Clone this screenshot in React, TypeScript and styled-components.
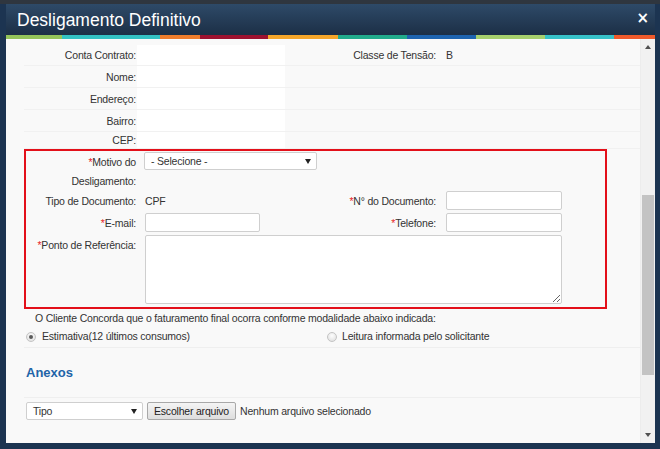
import React from 'react';
import styled, { createGlobalStyle } from 'styled-components';

const Global = createGlobalStyle`
  html, body { margin: 0; padding: 0; }
  body {
    width: 660px; height: 449px; overflow: hidden;
    background: #1c3451;
    font-family: "Liberation Sans", Arial, sans-serif;
  }
`;

const Frame = styled.div`
  width: 660px; height: 449px; box-sizing: border-box;
  padding: 4px 5px 6px 6px;
  background: linear-gradient(#2f363f 0 4px, #1c3451 4px);
  display: flex;
`;

const Dialog = styled.div`
  flex: 1;
  display: flex; flex-direction: column;
  background: #f9f9f9;
  overflow: hidden;
`;

const Header = styled.div`
  height: 31px;
  display: flex; align-items: center; justify-content: space-between;
  padding: 0 6px 0 11px;
  background: linear-gradient(#2e4a68, #1c2f46);
`;

const Title = styled.h1`
  margin: 1px 0 0 0;
  color: #fff;
  font: 400 17.5px "Liberation Sans", Arial, sans-serif;
`;

const Close = styled.span`
  color: #fff;
  font: 700 15px "DejaVu Sans", sans-serif;
  line-height: 1;
  margin-top: -2px;
`;

const Stripe = styled.div`
  height: 4px;
  display: flex;
`;

const Seg = styled.div<{ $w: number; $c: string }>`
  width: ${p => p.$w}px;
  flex: none;
  background: ${p => p.$c};
`;

const Body = styled.div`
  flex: 1;
  display: flex;
  min-height: 0;
`;

const Content = styled.div`
  flex: 1;
  padding: 6px 0 0 18px;
  color: #333;
  font-size: 10.5px;
  letter-spacing: -0.2px;
`;

const Scroll = styled.div`
  width: 15px;
  flex: none;
  display: flex; flex-direction: column; align-items: center;
  background: #f1f1f1;
  border-left: 1px solid #ececec;
  box-sizing: border-box;
`;

const Arrow = styled.div<{ $down?: boolean }>`
  height: 16px; width: 100%;
  display: flex; align-items: center; justify-content: center;
  &::after {
    content: "";
    border-left: 3.5px solid transparent;
    border-right: 3.5px solid transparent;
    ${p => (p.$down ? 'border-top: 4px solid #505050;' : 'border-bottom: 4px solid #505050;')}
  }
`;

const TrackSpace = styled.div<{ $h: number }>`
  height: ${p => p.$h}px; flex: none;
`;

const Thumb = styled.div`
  width: 12px; height: 180px;
  background: #c3c3c3;
  flex: none;
`;

const Grid = styled.div<{ $first: number; $h?: number; $align?: string }>`
  display: grid;
  grid-template-columns: ${p => p.$first}px 190px 119px 116px 1fr;
  align-items: ${p => p.$align || 'center'};
  ${p => (p.$h ? `height: ${p.$h}px;` : '')}
`;

const InfoRow = styled(Grid)`
  border-bottom: 1px solid #f1f1f1;
  box-sizing: border-box;
`;

const Label = styled.div<{ $lh?: number }>`
  text-align: right;
  padding-right: 1px;
  line-height: ${p => p.$lh || 14}px;
`;

const Label2 = styled.div`
  text-align: right;
  padding-right: 10px;
`;

const Value = styled.div<{ $white?: boolean }>`
  align-self: stretch;
  display: flex; align-items: center;
  padding-left: 8px;
  ${p => (p.$white ? 'background: linear-gradient(90deg, #fff 148px, transparent 148px);' : '')}
`;

const Value2 = styled.div`
  padding-left: 0;
`;

const Req = styled.span`
  color: #e8262b;
`;

const RedBox = styled.div`
  width: 583px;
  box-sizing: border-box;
  border: 2px solid #e3101a;
  padding: 1px 0 3px 0;
  display: flex; flex-direction: column; gap: 1px;
`;

const SelectBox = styled.div<{ $w: number }>`
  width: ${p => p.$w}px; height: 18px; box-sizing: border-box;
  border: 1px solid #cfcfcf;
  border-radius: 2px;
  background: #fff;
  display: flex; align-items: center; justify-content: space-between;
  padding: 0 5px 0 6px;
  color: #333;
  font-size: 10.5px;
  letter-spacing: -0.2px;
`;

const Caret = styled.span`
  width: 0; height: 0;
  border-left: 3px solid transparent;
  border-right: 3px solid transparent;
  border-top: 5px solid #222;
`;

const Input = styled.input<{ $w: number }>`
  width: ${p => p.$w}px; height: 19px; box-sizing: border-box;
  border: 1px solid #cfcfcf;
  border-radius: 2px;
  background: #fff;
  margin: 0;
  padding: 0 4px;
  outline: none;
`;

const TextArea = styled.textarea`
  grid-column: 2 / 5;
  width: 417px; height: 69px; box-sizing: border-box;
  margin: 0 0 0 8px;
  border: 1px solid #cfcfcf;
  border-radius: 2px;
  background: #fff;
  outline: none;
  display: block;
`;

const Sentence = styled.div`
  margin-top: 2px;
  padding-left: 11px;
  line-height: 14px;
`;

const RadioRow = styled.div`
  margin-top: 2px;
  height: 21px;
  display: grid;
  grid-template-columns: 303px 1fr;
  align-items: center;
  border-bottom: 1px solid #efefef;
  box-sizing: border-box;
  padding-bottom: 3px;
`;

const RadioOpt = styled.label<{ $gap: number; $pad: number }>`
  display: flex; align-items: center;
  gap: ${p => p.$gap}px;
  padding-left: ${p => p.$pad}px;
`;

const Radio = styled.span<{ $on?: boolean }>`
  width: 10px; height: 10px; box-sizing: border-box;
  border-radius: 50%;
  border: 1px solid #c4c4c4;
  background: radial-gradient(circle at 50% 35%, #fdfdfd, #dcdcdc);
  display: flex; align-items: center; justify-content: center;
  margin-top: 3px;
  &::after {
    content: "";
    width: 4px; height: 4px; border-radius: 50%;
    background: ${p => (p.$on ? '#5a5a5a' : 'transparent')};
  }
`;

const AnexosRow = styled.div`
  height: 50px;
  display: flex; align-items: center;
  padding-left: 2px;
  border-bottom: 1px solid #efefef;
  box-sizing: border-box;
`;

const Anexos = styled.h2`
  margin: 0;
  color: #1f64a8;
  font: 700 13px "Liberation Sans", Arial, sans-serif;
  letter-spacing: 0;
`;

const FileRow = styled.div`
  padding: 4px 0 0 2px;
  display: flex; align-items: center; gap: 4px;
`;

const FileButton = styled.button`
  height: 18px;
  padding: 0 6px;
  border: 1px solid #a8a8a8;
  border-radius: 2px;
  background: linear-gradient(#f4f4f4, #dedede);
  color: #222;
  font: 10.5px "Liberation Sans", Arial, sans-serif;
  letter-spacing: -0.2px;
`;

const stripe: [number, string][] = [
  [56, '#94c35a'],
  [98, '#33c1c3'],
  [40, '#ef7d2c'],
  [68, '#9e1230'],
  [70, '#f5a62a'],
  [69, '#21ab8b'],
  [69, '#1e64b0'],
  [69, '#a6cf6d'],
  [69, '#36c1c8'],
  [41, '#f05a2b'],
];

export default function App() {
  return (
    <>
      <Global />
      <Frame>
        <Dialog>
          <Header>
            <Title>Desligamento Definitivo</Title>
            <Close>×</Close>
          </Header>
          <Stripe>
            {stripe.map(([w, c], i) => (
              <Seg key={i} $w={w} $c={c} />
            ))}
          </Stripe>
          <Body>
            <Content>
              <InfoRow $first={113} $h={21}>
                <Label>Conta Contrato:</Label>
                <Value $white />
                <Label2>Classe de Tensão:</Label2>
                <Value2>B</Value2>
              </InfoRow>
              <InfoRow $first={113} $h={22}>
                <Label>Nome:</Label>
                <Value $white />
              </InfoRow>
              <InfoRow $first={113} $h={22}>
                <Label>Endereço:</Label>
                <Value $white />
              </InfoRow>
              <InfoRow $first={113} $h={22}>
                <Label>Bairro:</Label>
                <Value $white />
              </InfoRow>
              <InfoRow $first={113} $h={17}>
                <Label>CEP:</Label>
                <Value $white />
              </InfoRow>

              <RedBox>
                <Grid $first={111} $h={37} $align="start">
                  <Label $lh={19} style={{ paddingTop: 1 }}>
                    <Req>*</Req>Motivo do
                    <br />
                    Desligamento:
                  </Label>
                  <Value>
                    <SelectBox $w={173} style={{ marginLeft: -1, alignSelf: 'flex-start' }}>
                      <span>- Selecione -</span>
                      <Caret />
                    </SelectBox>
                  </Value>
                </Grid>
                <Grid $first={111} $h={21}>
                  <Label>Tipo de Documento:</Label>
                  <Value>CPF</Value>
                  <Label2>
                    <Req>*</Req>N° do Documento:
                  </Label2>
                  <Value2>
                    <Input $w={116} />
                  </Value2>
                </Grid>
                <Grid $first={111} $h={21}>
                  <Label>
                    <Req>*</Req>E-mail:
                  </Label>
                  <Value>
                    <Input $w={115} />
                  </Value>
                  <Label2>
                    <Req>*</Req>Telefone:
                  </Label2>
                  <Value2>
                    <Input $w={116} />
                  </Value2>
                </Grid>
                <Grid $first={111} $align="start" style={{ marginTop: 1 }}>
                  <Label style={{ paddingTop: 3 }}>
                    <Req>*</Req>Ponto de Referência:
                  </Label>
                  <TextArea />
                </Grid>
              </RedBox>

              <Sentence>O Cliente Concorda que o faturamento final ocorra conforme modalidade abaixo indicada:</Sentence>
              <RadioRow>
                <RadioOpt $gap={6} $pad={2}>
                  <Radio $on />
                  Estimativa(12 últimos consumos)
                </RadioOpt>
                <RadioOpt $gap={5} $pad={0}>
                  <Radio />
                  Leitura informada pelo solicitante
                </RadioOpt>
              </RadioRow>
              <AnexosRow>
                <Anexos>Anexos</Anexos>
              </AnexosRow>
              <FileRow>
                <SelectBox $w={117}>
                  <span>Tipo</span>
                  <Caret />
                </SelectBox>
                <FileButton>Escolher arquivo</FileButton>
                <span>Nenhum arquivo selecionado</span>
              </FileRow>
            </Content>
            <Scroll>
              <Arrow />
              <TrackSpace $h={140} />
              <Thumb />
              <div style={{ flex: 1 }} />
              <Arrow $down />
            </Scroll>
          </Body>
        </Dialog>
      </Frame>
    </>
  );
}
